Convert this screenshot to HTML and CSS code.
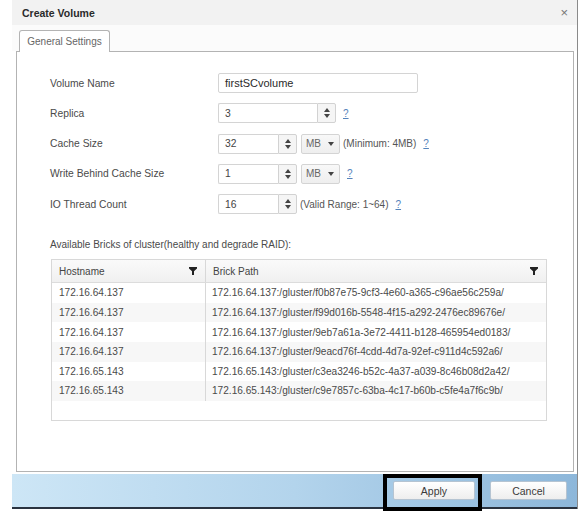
FILE: index.html
```html
<!DOCTYPE html>
<html>
<head>
<meta charset="utf-8">
<link rel="stylesheet" href="styles.css">
</head>
<body>
<div class="dialog">
  <div class="titlebar">
    <span class="title">Create Volume</span>
    <span class="close">×</span>
  </div>
  <div class="tabs">
    <div class="tab">General Settings</div>
  </div>
  <div class="panel">
    <div class="form">
      <div class="row">
        <div class="label">Volume Name</div>
        <div class="field"><div class="input wide">firstSCvolume</div></div>
      </div>
      <div class="row">
        <div class="label">Replica</div>
        <div class="field">
          <div class="input w98">3</div><div class="spin"><span class="up"></span><span class="down"></span></div>
          <a class="help">?</a>
        </div>
      </div>
      <div class="row">
        <div class="label">Cache Size</div>
        <div class="field">
          <div class="input w60">32</div><div class="spin"><span class="up"></span><span class="down"></span></div>
          <div class="select">MB <span class="caret"></span></div>
          <span class="note">(Minimum: 4MB)</span>
          <a class="help">?</a>
        </div>
      </div>
      <div class="row">
        <div class="label">Write Behind Cache Size</div>
        <div class="field">
          <div class="input w60">1</div><div class="spin"><span class="up"></span><span class="down"></span></div>
          <div class="select">MB <span class="caret"></span></div>
          <a class="help">?</a>
        </div>
      </div>
      <div class="row">
        <div class="label">IO Thread Count</div>
        <div class="field">
          <div class="input w60">16</div><div class="spin"><span class="up"></span><span class="down"></span></div>
          <span class="note">(Valid Range: 1~64)</span>
          <a class="help">?</a>
        </div>
      </div>
    </div>
    <div class="bricks-label">Available Bricks of cluster(healthy and degrade RAID):</div>
    <div class="grid">
      <div class="ghead">
        <div class="c1">Hostname<svg class="filter" viewBox="0 0 8 8"><path d="M0 0H8V1.6L5 4.3V8H3V4.3L0 1.6Z" fill="#222"/></svg></div>
        <div class="c2">Brick Path<svg class="filter" viewBox="0 0 8 8"><path d="M0 0H8V1.6L5 4.3V8H3V4.3L0 1.6Z" fill="#222"/></svg></div>
      </div>
      <div class="gbody">
        <div class="grow"><div class="c1">172.16.64.137</div><div class="c2">172.16.64.137:/gluster/f0b87e75-9cf3-4e60-a365-c96ae56c259a/</div></div>
        <div class="grow alt"><div class="c1">172.16.64.137</div><div class="c2">172.16.64.137:/gluster/f99d016b-5548-4f15-a292-2476ec89676e/</div></div>
        <div class="grow"><div class="c1">172.16.64.137</div><div class="c2">172.16.64.137:/gluster/9eb7a61a-3e72-4411-b128-465954ed0183/</div></div>
        <div class="grow alt"><div class="c1">172.16.64.137</div><div class="c2">172.16.64.137:/gluster/9eacd76f-4cdd-4d7a-92ef-c911d4c592a6/</div></div>
        <div class="grow"><div class="c1">172.16.65.143</div><div class="c2">172.16.65.143:/gluster/c3ea3246-b52c-4a37-a039-8c46b08d2a42/</div></div>
        <div class="grow alt"><div class="c1">172.16.65.143</div><div class="c2">172.16.65.143:/gluster/c9e7857c-63ba-4c17-b60b-c5fe4a7f6c9b/</div></div>
      </div>
    </div>
  </div>
  <div class="footer">
    <div class="btn apply">Apply</div>
    <div class="btn cancel">Cancel</div>
    <div class="highlight"></div>
  </div>
</div>
</body>
</html>
```

FILE: styles.css
```css
* { box-sizing: border-box; }
html, body { margin: 0; padding: 0; background: #fff; }
body {
  font-family: "Liberation Sans", Arial, sans-serif;
  font-size: 10.3px;
  color: #4a4a4a;
  width: 587px;
  height: 519px;
  overflow: hidden;
}
.dialog {
  position: relative;
  margin-left: 12px;
  width: 566px;
  border-right: 1px solid #8a8a8a;
}
.titlebar {
  height: 25px;
  background: #f2f2f2;
  display: flex;
  align-items: center;
  justify-content: space-between;
  padding: 0 9px 0 10px;
}
.title {
  font-weight: bold;
  font-size: 10.5px;
  color: #2a2a2a;
}
.close {
  font-size: 13px;
  color: #777;
}
.tabs {
  height: 26px;
  padding: 5px 0 0 7px;
  display: flex;
  background: #fbfbfb;
}
.tab {
  width: 91px;
  height: 22px;
  border: 1px solid #b3b3b3;
  border-bottom: none;
  border-radius: 3px 3px 0 0;
  background: #fff;
  color: #666;
  display: flex;
  align-items: center;
  justify-content: center;
  font-size: 10px;
  margin-bottom: -1px;
  position: relative;
  z-index: 1;
}
.panel {
  margin: 0 3px 0 4px;
  height: 421px;
  border: 1px solid #b3b3b3;
  background: #fff;
  padding: 21px 0 0 33px;
}
.form {
  display: flex;
  flex-direction: column;
  gap: 10.3px;
}
.row {
  display: flex;
  align-items: center;
  height: 20px;
}
.label {
  width: 168px;
  color: #4a4a4a;
}
.field {
  display: flex;
  align-items: center;
  height: 20px;
}
.input {
  height: 20px;
  border: 1px solid #d4d4d4;
  border-radius: 2px;
  padding: 0 6px;
  display: flex;
  align-items: center;
  background: #fff;
  color: #444;
}
.input.wide { width: 200px; font-size: 11px; color: #2a2a2a; }
.input.w98 { width: 99px; border-right: none; border-radius: 2px 0 0 2px; }
.input.w60 { width: 60px; border-right: none; border-radius: 2px 0 0 2px; }
.spin {
  width: 19px;
  height: 20px;
  border: 1px solid #d2d2d2;
  border-radius: 0 2px 2px 0;
  background: #f5f5f5;
  display: flex;
  flex-direction: column;
  align-items: center;
  justify-content: center;
  gap: 2px;
}
.up, .down {
  width: 0; height: 0;
  border-left: 3px solid transparent;
  border-right: 3px solid transparent;
}
.up { border-bottom: 4px solid #444; }
.down { border-top: 4px solid #444; }
.select {
  margin-left: 4px;
  width: 39px;
  height: 20px;
  border: 1px solid #d4d4d4;
  border-radius: 2px;
  background: linear-gradient(#f8f8f8, #eeeeee);
  display: flex;
  align-items: center;
  padding-left: 4px;
  gap: 7px;
  color: #666;
  font-size: 10px;
}
.caret {
  width: 0; height: 0;
  border-left: 3px solid transparent;
  border-right: 3px solid transparent;
  border-top: 4px solid #444;
}
.note {
  margin-left: 3px;
  color: #555;
  font-size: 10px;
}
.help {
  margin-left: 7px;
  color: #5583bb;
  text-decoration: underline;
  font-size: 10px;
}
.bricks-label {
  margin-top: 25px;
  color: #4a4a4a;
  font-size: 10px;
}
.grid {
  margin-top: 9px;
  margin-left: 1px;
  width: 496px;
  height: 162px;
  border: 1px solid #d8d8d8;
  display: flex;
  flex-direction: column;
}
.ghead {
  display: flex;
  height: 23px;
  background: linear-gradient(#fafafa, #f0f0f0);
  border-bottom: 1px solid #dcdcdc;
}
.ghead .c1, .ghead .c2 {
  display: flex;
  align-items: center;
  justify-content: space-between;
  padding: 0 8px 0 7px;
  color: #444;
  font-size: 10px;
}
.c1 { width: 154px; border-right: 1px solid #d8d8d8; padding-left: 7px; }
.c2 { flex: 1; padding-left: 6px; }
.filter { width: 8px; height: 8px; }
.gbody .grow {
  display: flex;
  height: 19.6px;
  align-items: stretch;
}
.grow .c1, .grow .c2 {
  display: flex;
  align-items: center;
  color: #4a4a4a;
  font-size: 10.1px;
}
.grow.alt { background: #f7f7f7; }
.footer {
  position: relative;
  margin-top: 2px;
  height: 35px;
  background: linear-gradient(90deg, #cde6f6 0%, #b3d4ec 50%, #8db7da 100%);
  border-bottom: 2px solid #2a3340;
  display: flex;
  align-items: center;
  justify-content: flex-end;
  gap: 15px;
  padding-right: 10px;
}
.btn {
  height: 19px;
  border: 1px solid #b5c4d2;
  border-radius: 2px;
  background: linear-gradient(#ffffff, #eeeeee);
  display: flex;
  align-items: center;
  justify-content: center;
  color: #3a3a3a;
  font-size: 10.5px;
}
.apply { width: 82px; }
.cancel { width: 77px; }
.highlight {
  position: absolute;
  left: 371px;
  top: 0;
  width: 99px;
  height: 37px;
  border: 4px solid #000;
}
```
